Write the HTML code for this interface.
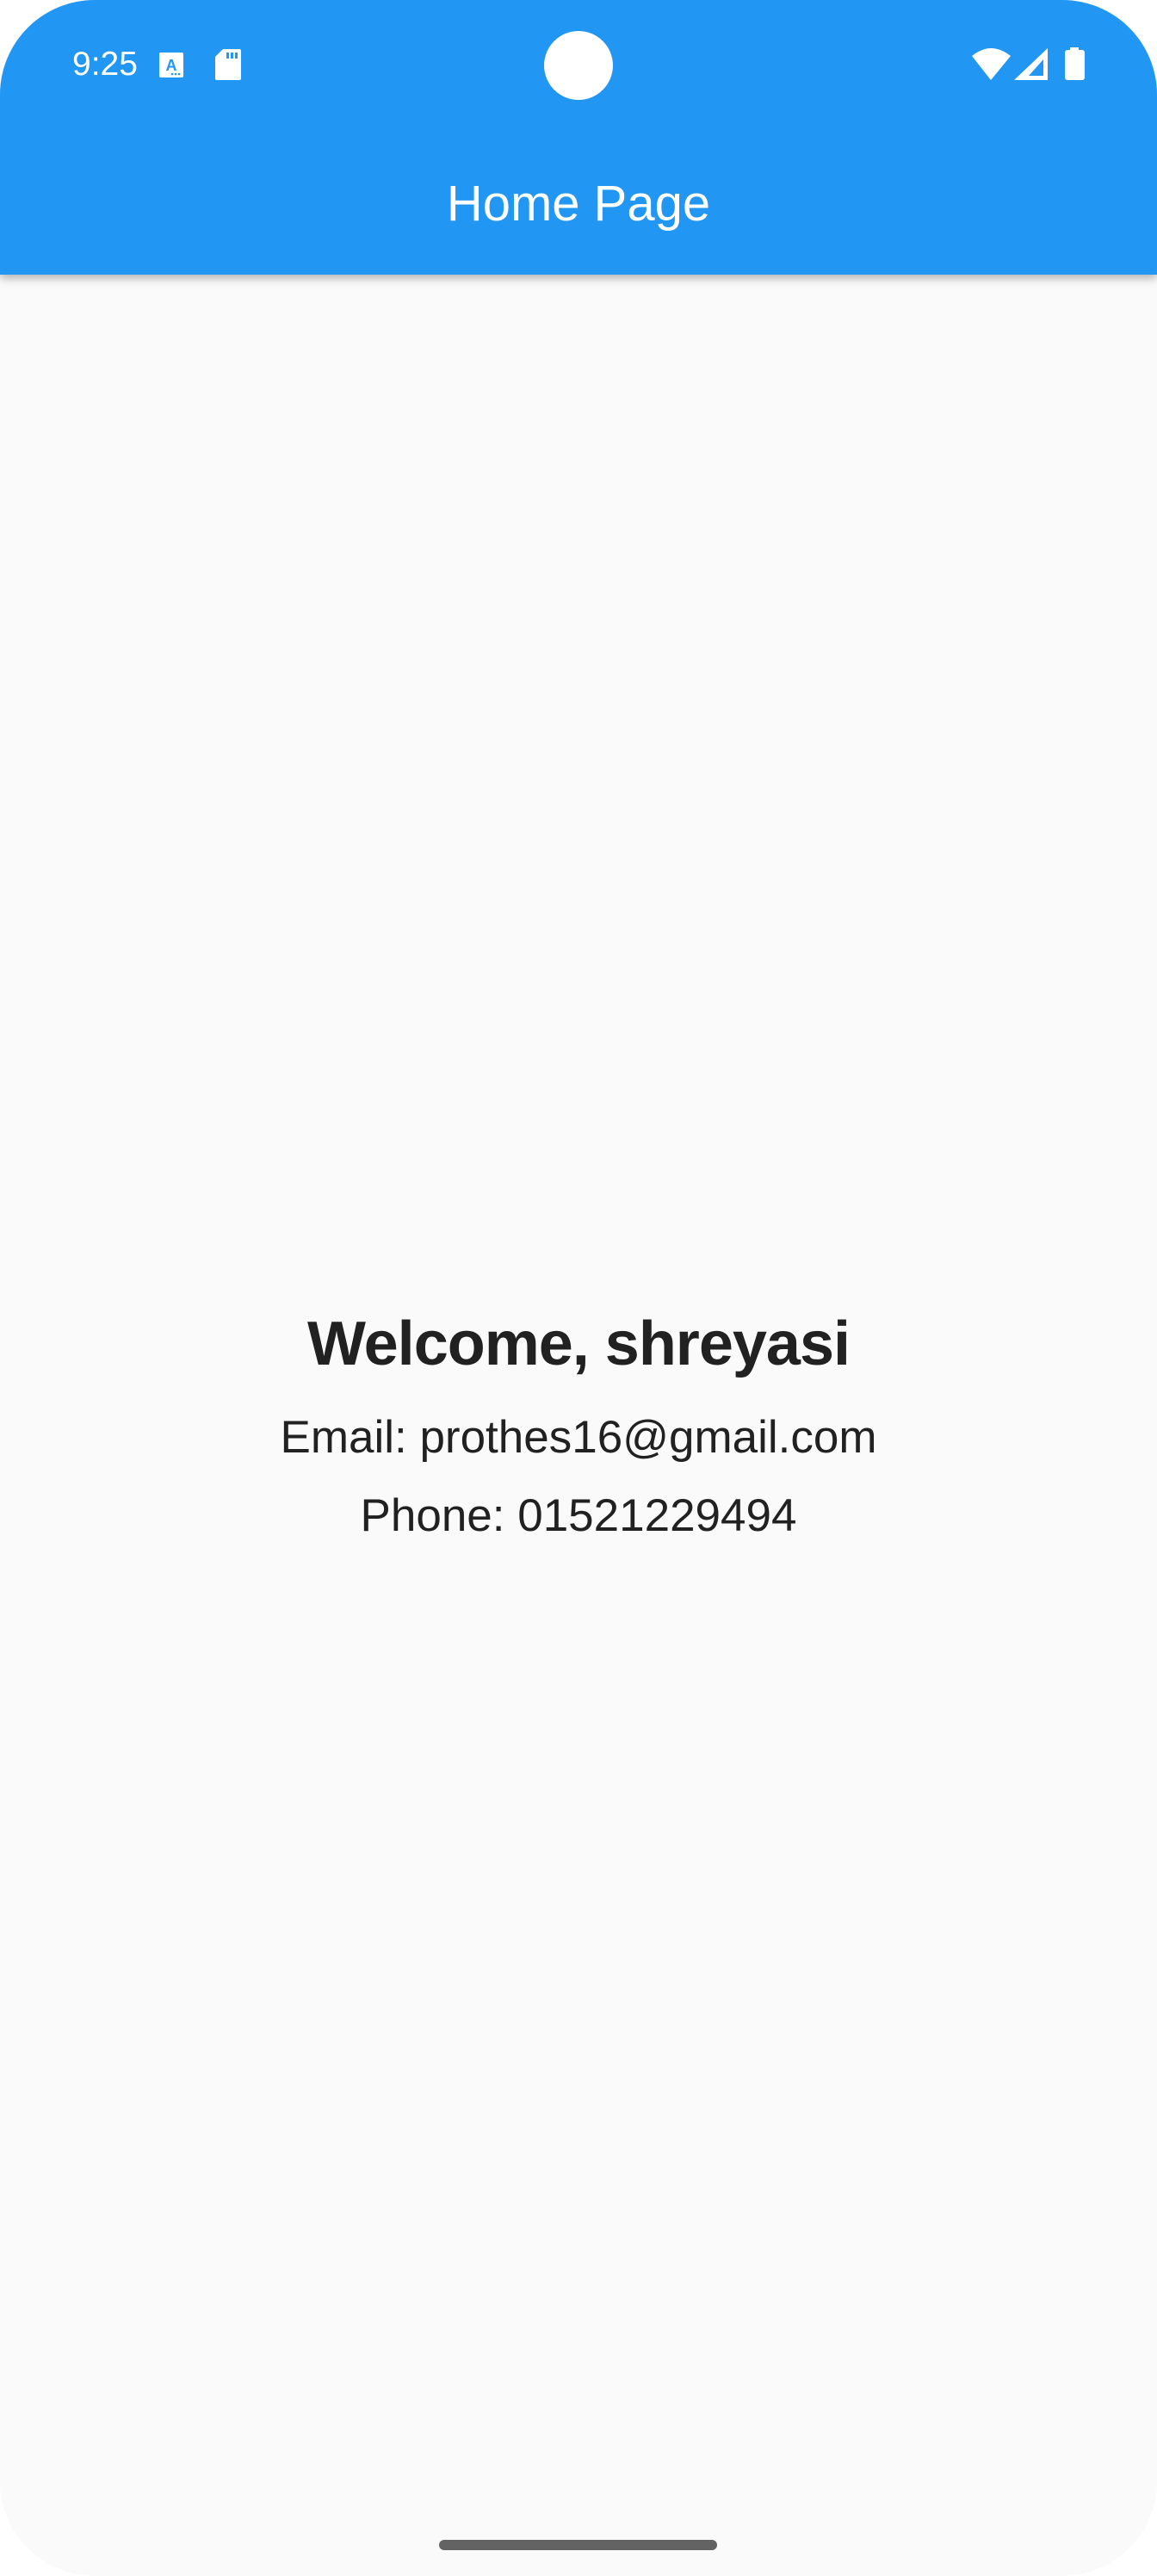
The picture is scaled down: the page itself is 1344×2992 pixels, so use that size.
<!DOCTYPE html>
<html><head><meta charset="utf-8"><style>
html,body{margin:0;padding:0;background:#fff;}
body{width:1344px;height:2992px;position:relative;overflow:hidden;font-family:"Liberation Sans",Roboto,sans-serif;}
.screen{position:absolute;left:0;top:0;width:1344px;height:2992px;background:#fafafa;border-radius:110px;overflow:hidden;}
.bar{position:absolute;left:0;top:0;width:1344px;height:319px;background:#2196F3;box-shadow:0 4px 10px rgba(0,0,0,0.3);}
.t{position:absolute;color:#fff;}
.c{position:absolute;left:0;width:1344px;text-align:center;color:#212121;}
</style></head><body>
<div class="screen">
<div class="bar"></div>
<div class="t" style="left:84px;top:52px;font-size:39px;line-height:46px;">9:25</div>
<svg style="position:absolute;left:0;top:0" width="1344" height="319">
  <rect x="185" y="61" width="28" height="29" rx="2" fill="#fff"/>
  <text x="199" y="82" font-family="Liberation Sans" font-weight="bold" font-size="18" fill="#2196F3" text-anchor="middle">A</text>
  <circle cx="200" cy="86" r="1.3" fill="#2196F3"/><circle cx="204" cy="86" r="1.3" fill="#2196F3"/><circle cx="208" cy="86" r="1.3" fill="#2196F3"/>
  <path d="M259 57 H278 a2 2 0 0 1 2 2 V91 a2 2 0 0 1 -2 2 H252 a2 2 0 0 1 -2 -2 V66 Z" fill="#fff"/>
  <rect x="263" y="61" width="3" height="7" fill="#2196F3"/><rect x="268" y="61" width="3" height="7" fill="#2196F3"/><rect x="273" y="61" width="3" height="7" fill="#2196F3"/>
  <circle cx="672" cy="76" r="40" fill="#fff"/>
  <path d="M1129 65 Q1151 47 1174 65 L1151 93 Z" fill="#fff"/>
  <path d="M1217 56 V93 H1178 Z" fill="#fff"/>
  <path d="M1212 69 V88 H1195 Z" fill="#2196F3"/>
  <rect x="1243" y="55" width="10" height="5" fill="#fff"/>
  <rect x="1237" y="58" width="23" height="35" rx="3" fill="#fff"/>
</svg>
<div class="t" style="left:0;width:1344px;text-align:center;top:203px;font-size:58px;line-height:68px;">Home Page</div>
<div class="c" style="top:1516px;font-size:72px;line-height:90px;font-weight:bold;letter-spacing:-1px;">Welcome, shreyasi</div>
<div class="c" style="top:1638px;font-size:53px;line-height:64px;">Email: prothes16@gmail.com</div>
<div class="c" style="top:1729px;font-size:53px;line-height:64px;">Phone: 01521229494</div>
<div style="position:absolute;left:510px;top:2950px;width:323px;height:12px;border-radius:6px;background:#636363;"></div>
</div>
</body></html>
